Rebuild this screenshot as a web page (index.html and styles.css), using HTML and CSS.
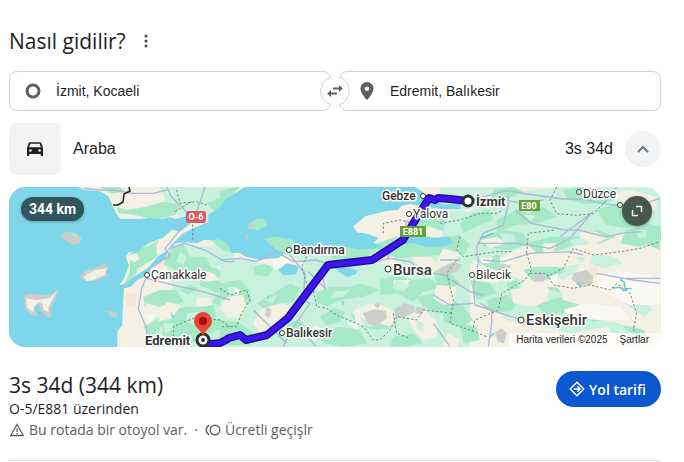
FILE: index.html
```html
<!DOCTYPE html>
<html lang="tr">
<head>
  <meta charset="UTF-8" />
  <meta name="viewport" content="width=device-width, initial-scale=1.0" />
  <title>Nasıl gidilir?</title>
  <link rel="stylesheet" href="styles.css">
</head>
<body>
  <main class="directions">
    <header class="header">
      <h1 class="title">Nasıl gidilir?</h1>
      <button class="more-btn" type="button" aria-label="Diğer">
        <svg width="4" height="14" viewBox="0 0 4 14" fill="#474747"><circle cx="2" cy="2" r="1.5"/><circle cx="2" cy="7" r="1.5"/><circle cx="2" cy="12" r="1.5"/></svg>
      </button>
    </header>

    <form class="places">
      <label class="field">
        <svg class="field-icon" viewBox="0 0 20 20"><circle cx="10" cy="10" r="6" fill="none" stroke="#5e5e5e" stroke-width="3"/></svg>
        <input class="place" type="text" value="İzmit, Kocaeli" aria-label="Başlangıç">
      </label>
      <label class="field">
        <svg class="field-icon" viewBox="0 0 20 20"><path d="M10 1a6.600 6.600 0 0 0-6.600 6.600C3.400 12.300 10 19.200 10 19.200s6.600-6.900 6.600-11.600A6.600 6.600 0 0 0 10 1zm0 9a2.300 2.300 0 1 1 0-4.600 2.300 2.300 0 0 1 0 4.600z" fill="#5e5e5e"/></svg>
        <input class="place" type="text" value="Edremit, Balıkesir" aria-label="Varış">
      </label>
      <button class="swap-btn" type="button" aria-label="Yer değiştir">
        <svg width="30" height="30" viewBox="0 0 30 30">
          <path d="M11 1.100A14.500 14.500 0 0 0 11 28.900M19 1.100A14.500 14.500 0 0 1 19 28.900" fill="none" stroke="#d2d2d2"/>
          <path d="M13 12.500H19M17 17.500H11" stroke="#5e5e5e" stroke-width="2" fill="none"/>
          <path d="M19 9l3.700 3.500L19 16zM11 14l-3.700 3.500L11 21z" fill="#5e5e5e"/>
        </svg>
      </button>
    </form>

    <section class="mode">
      <span class="mode-icon">
        <svg width="18" height="18" viewBox="0 0 18 18"><path d="M4 2.200h10c.6 0 1.100.3 1.300.9L17 8v7.200c0 .5-.3.800-.8.800h-.7c-.5 0-.8-.3-.8-.8V14H3.300v1.200c0 .5-.3.800-.8.800h-.7c-.5 0-.8-.3-.8-.8V8l1.700-4.900c.2-.6.700-.9 1.300-.9zM4.300 3.700 3.100 7.300h11.800l-1.200-3.600zM4.400 9.200a1.300 1.300 0 1 0 0 2.600 1.300 1.300 0 0 0 0-2.600zm9.200 0a1.300 1.300 0 1 0 0 2.600 1.300 1.300 0 0 0 0-2.600z" fill="#1f1f1f" fill-rule="evenodd"/></svg>
      </span>
      <span class="mode-name">Araba</span>
      <span class="mode-time">3s 34d</span>
      <button class="round-btn" type="button" aria-label="Daralt">
        <svg width="14" height="14" viewBox="0 0 14 14"><path d="M2 10l5-5 5 5" fill="none" stroke="#70757a" stroke-width="2"/></svg>
      </button>
    </section>

    <section class="map">
      <svg class="map-canvas" viewBox="0 0 652 160" preserveAspectRatio="xMidYMid slice">
        <rect width="652" height="160" fill="#f4f0e4"/>

        <!-- west -->
        <g transform="scale(.33333) translate(-27 -21)">
          <path class="light" d="M480 21h210v80l-60 20-90-10-40-40zM700 190l-90 10-60-10-40 25-10 50 20 60-40 40-40 90-10 90h280z"/>
          <path class="wood" d="M350 80l30 10 60-10 50-15 50 10-15 30-60 15-60-15-50-5zM620 70l50-20 30-5v60l-60-15zM390 220l60-25 25-15 10 30-20 25-50 30-15 35-30 20 20-45zM510 200l40-10 20 40 50 0 10 30 50 15-30 20-60-10-50 10-20-30-30-10zM430 350l50-20 50 0 20 35-40 20-50 0-20 25zM480 400l80-20 60 0 30-30 50 20v60l-60 25-50 30-60 10-40-20zM630 180l50-10 20 10v40l-30-10-20-15zM600 290l50 10 50 20v25l-60-10-40-20zM300 21h60l15 15-40 5zM430 440l60-30-10 40-30 20zM540 330l30-15 25 10-30 20z"/>
          <path class="sand" d="M375 335l35 5 5 70 20 60 0 30h-80l20-60zM440 370l40 10 30-10-10 40-50 5-20-20zM600 270l40 10 20 20-40 5-30-10zM590 350l40 5 10 20-50 5zM390 225l20-5 10 15-15 12-15-8zM470 190l60-45 40-15 20 15-60 35-30 50-30-10zM500 365l45 10-30 40-40 10z"/>
          <path class="light" d="M560 400l40-5 20 25-30 20-30-15zM640 370l30 10 10 30-30 10zM490 430l30 0 0 20-25 10zM540 215l20 15-10 25-20-10z"/>
          <path class="peach" d="M380 340l30 5-5 35-25-10z"/>
          <path class="pale" d="M430 405l40-5-20 30zM650 260l30-10 20 5v30l-30 0z"/>
        </g>

        <!-- center -->
        <g transform="scale(.33333) translate(633 -21)">
          <path class="light" d="M0 215l50 20 60-10 70 5 90-30 180-5 120 10 120-30 60-20V501H0z"/>
          <path class="wood" d="M0 35l40-14h20l-20 20-40 20zM0 310l60-10 30 30 5 40-40 10-20-20-35 0zM100 260l40-10 20 20-15 20-40-5zM110 370l50-30 50-30 30 15-20 40-60 10-30 10zM290 340l40-20 60 0 30-10 60 20-50 20-70 10-40 20-30-15zM330 230l60-30 80 10-30 20-70 20zM430 200l50-5 60 5-50 15zM480 300l50-15 50 15 50-5 30 30-50 10-30 30-50-25-50 5zM590 350l50-10 60 20 40 25-90 15-40-20zM390 400l40 10 80 0 20 30-60 10-60-15zM300 410l40-25 35 10-15 30-40 10zM440 200l90-30 40 0 20 20 60 10 80-10-10 30-120 10-70 5-30-15zM610 90l120 10 10 40-70 15-40-15-50 0zM0 420l50 5 50 30-10 40H0zM300 460l60-20 60 10 20 40-60 10-70-10zM520 470l60-10 30 30-60 10h-40zM640 260l50 20 30 30-30 20-40-10zM200 430l40-10 20 20-20 30-30-10z"/>
          <path class="sand" d="M40 220l60 15 60-10 60 5 40 30-60 5-80-15-60-10zM120 390l60-20 40 10-10 40-40 20-20 40-30-20-20-30zM400 390l50-20 50 10 30 20-10 40-50-10-60 10zM560 405l50-25 20 30 40 20-10 40-50 10-30-30zM20 350l50-5 10 40-30 30-30-5-20-25zM420 240l50-20 50 10 10 25-60-5zM520 300l50 0-10 20-40-5zM250 450l40-15 20 20-30 30zM570 230l60 0 30 30-20 20-40-20zM280 300l40-5 0 30-30 0z"/>
          <path class="light" d="M340 335l50-5-20 20-35 5zM530 300l40 15-20 20-35-10zM130 360l40-15-10 25zM420 410l30 15 30-5-10 20-40 0zM20 320l30 0 10 20-30 5zM590 420l20 10 0 25-20-10z"/>
          <path class="grey" d="M428 400l35-12 35 5 3 22-35 25-22-10zM522 390l28-20 30 5 5 20-35 18-25-2zM590 380l25 5-10 18-20-5zM460 372l22-3-8 18zM140 380l15 10-8 25-12-10z"/>
          <path class="pale" d="M160 240l60-10-20 30-40 10zM380 430l40 0-10 20zM40 320l20 10-10 20z"/>
        </g>

        <!-- east -->
        <g transform="scale(.33333) translate(1293 -21)">
          <path class="light" d="M30 90l60 5 130-60 160-14h290v110l-60 30-130 0-100 50-120-15-130 60L30 240l-30-60zM-10 410l70 0 30 90H-10zM110 300l80-20 60 20-20 70-60 30-60-30zM300 250l120-20 120 10-60 50-100 20zM190 370l150-20 110 30 60 60-120 20-120-30-80-10zM0 21h220l-60 50-100 20-60-10z"/>
          <path class="wood" d="M-20 175l80-10 30 30-20 30-60-10-40-20zM60 130l40-30 50-10 10 30-50 20-40 20zM170 120l60-30 40 10 40-20 40 30-60 20-60 5-60 20zM120 170l70-20 60 10 20 30-60 20-80-10zM260 190l70-20 80 0 60-20 60 20-50 20-80 5-50 20-60 5zM370 30l50-9 100 10 30 20-60 20-60 0-50-15zM470 90l60-20 40 30 60-5v30l-70 20-60-10zM560 150l60-20 50 10v40l-70 20-60-10zM110 240l60-15 60 10-20 30-70 10zM90 300l60 10 20 30-60 20zM140 360l60-15 40 20-30 30-60 0zM250 270l60-20 70 20-40 25-60 10zM320 320l60 5 60 20 60 10 30 30-70 10-50-15-60-20zM10 370l60 10 30 40-40 20-50-15zM60 430l50 10 10 40-50 10zM530 380l60 20 30 70-40 10-30-30zM610 190l50-10v30zM160 30l60-9 30 15-50 20-50 15zM200 310l30-10 10 40-30 10zM280 370l70-15 60 20 70 10 40 30-60 10-80-25-60 5z"/>
          <path class="sand" d="M500 45l70-15 80 20v40l-80-10zM420 155l50 0 30 20-40 20-40-10zM200 230l70 10 50-30 60 10 50 30-60 10-80 0-70 15zM440 230l100-20 130 0v260l-90-30-80-10-60-50-70-20-20-50 50-30zM100 240l40 20 60 20-30 30-70-10zM10 205l50 15-20 40-35 25-20-30zM210 330l60-10 60 40-50 20-60-10zM100 390l80 10 60 60-60 30-40-20zM-10 315l60 5-10 50-30 5-30-20zM20 460l40 20-10 20H10zM310 190l40 0-10 30-30-5zM120 180l50-10 30 20-50 15z"/>
          <path class="light" d="M460 220l60 10 30 20-60 15-40-15zM560 340l40 10 40 40-30 20-40-30-30-20zM180 160l40 5 10 20-40 0zM390 180l40-5 20 10-50 12zM250 105l40 0-20 20zM590 150l30 0 0 20-25 5zM330 330l40 10-10 15-40-5zM480 420l60 10 30 30-50 0z"/>
          <path class="pale" d="M470 290l60-15 100 10 30 30v60l-90 0-60-30-40-20zM370 390l70-20 100 10 30 40-100 0-80-10zM180 230l50 0-20 25-30-5zM120 235l40-5-10 20-25 0zM330 290l25-10-5 30-15 5z"/>
          <path class="grey" d="M-5 268l45-23 28 10-20 22-48 8zM285 285l20-10 15 15-10 15-25 0zM400 280l40-10 20 20-5 25-35 0-25-15zM165 455l20-10 15 15-8 30-18-5zM170 260l40-5-5 15-18 5z"/>
          <path class="peach" d="M445 265l25-5 0 30-20-5z"/>
          <path d="M540 298l12 8 3 20 20 0M515 324l25-2 10 10 20-8M410 310l15 8M120 175l40-15M150 470l12-10" fill="none" stroke="#58c6e2" stroke-width="4"/>
        </g>

        <!-- sea -->
        <g class="water" transform="scale(.33333) translate(-27 -21)">
          <path d="M20 21h215l15 8 50 5 25 15 22 50 15 18 60 0 30-3 35 3 20-6 20 6 30-8 25 5-15 20-25 20-25-5-30 25-25 10-15 5-40 30-20-3-10 15 10 25-15 40-15 20 20-5 25-20 45-30 25-30 30-20 15-20 30-30 40-20 50-20 30-15 20-20V180l-20-15-25 15-30 0-20 10-30-3-35 3-20 20-15 30-35 20-25 30-20 10-20 20-20 5-5 80 0 30-15 20v50H20z"/>
          <path d="M510 395l15 15-8 5z"/>
        </g>
        <g class="water" transform="scale(.33333) translate(633 -21)">
          <path d="M75 21h510l25 15 10 25 50 12 50 0 0 14-50 1-50-8-50-8-25 5-10 12-40 5-60 15-35 30 10 18 35 5 30 12-15 15 30 12-60 8-60-8-60 5-50 5-60 5-25 18-60 5-40-10-15-10-25 0-15-30-35-15-20 5V105l35-25 20-25z"/>
          <path d="M545 185l30-18 25-5 15 8 40 3 30-3 15 18-25 10-50 3-50-12-30 5zM175 270l25-20 35 8-5 25-40 3zM345 265l45-2 22 10-5 10-25 8-20-12zM365 360l8 10-5 8zM140 350l12-5-8 15z"/>
        </g>
        <g transform="scale(.33333) translate(-27 -21)">
          <path class="grey" d="M180 170l15-14 30 2 20 15-5 18-25 4-15-12zM238 290l20-18 35-12 20-8 12 10-5 20 10 6-20 4-20 10-35 0zM70 345l30-5 30 5 20 0 28-20-20 50-8 15 8 20-15 3-20-20-8-22-12 15 14 22-20-2-22-18zM320 392l30 5 0 15-15-2z"/>
          <path class="sand" d="M250 290l35-20 35-5-5 20-35 14-20 4zM78 355l30 5 40-5 22-20-25 45 0 15-15-5-2-18-12-5-12 10-5 20-18-15z"/>
          <path class="wood" d="M205 158l20 0 8 8-15 0zM748 130l25-15 25 5 5 15-30 15-30-5zM790 175l40-5 50 10 5 20-35 18-25-12z"/>
          <path class="grey" d="M748 125l12 5-4 20-12-8zM738 168l8-2-3 14z"/>
        </g>

        <!-- roads and borders -->
        <g class="road" transform="scale(.33333) translate(-27 -21)">
          <path d="M500 21l15 30 45 45M615 21l-25 75-55 60-40 50 15 20-60 40-25 60-10 60 25 60 0 50M510 205l45-15 60 20 60 35 30 0M440 295l100 25 70 15 80 25M250 25l50 5 40 0 60 10 60 0 40-10"/>
        </g>
        <g class="road" transform="scale(.33333) translate(633 -21)">
          <path d="M0 240l60-5 50 10 60-30 50 30 70-5 70 25 110-20 40-10 60 10 40 30 60 10 80 50 40 10M210 225l45 55-5 80 20 10-60 85-20 45M265 275l50 50-10-60M100 390l60 60 40 40M505 240v-30M290 500l-30-30-20-40M560 120l-10 60M640 430l50 70"/>
        </g>
        <g class="road" transform="scale(.33333) translate(1293 -21)">
          <path d="M80 65l120-33 60 10 110 15 60 0 40 10 60 10 60 5 75-30M205 45l0 30-15 60-60 25-20 40 5 50-15 70 5 55 140 45M225 90l50 40 100 20 40 0 80 20 50-10 60-5M0 240l60 0M115 190l115 0 100 15 60-30 60-70M130 240l60 5 80-25 120-5 40 10 0 0M470 280l80 15 110 0M660 310l-80-10-60-10M120 370l35 20 0 40-10 70M-20 345l50 30 70-5M360 170l100-75M190 60l60 10 60-10"/>
        </g>
        <g class="border" transform="scale(.33333) translate(633 -21)">
          <path d="M0 325l30 20 50-15 10 30-25 40-15 40-50 0M260 230l-15 30 15 50 20 20 10 50 30 5 30 20 60 25 20 10 30 40 20 0 30-30 20-40 60 10 20-30 90 10M490 160l0-30 50-10 40 10M520 400l10 60 40 15"/>
        </g>
        <g class="border" transform="scale(.33333) translate(1293 -21)">
          <path d="M0 130l60-10 60-20 50 0 20-10M60 170l-10 40 20 20 100-15 50 0M350 21l-20 40 20 40 60 5 50-5 40-40 30-40M260 220l5-60 80-10M260 220l15 50-20 30-70 40-10 50-70 30-10 40M270 280l50 0 20 35 60 10 50-10 60 15 20-20 40 30 20 60-10 50 30 30M320 290l50-25 30-60 60 20 80-10 60-10 60-20M50 240l-30 40 20 80-10 70 60 20 50 20"/>
        </g>
        <g class="border" transform="scale(.33333) translate(-27 -21)">
          <path d="M530 30l10 40 50-5 30 10M525 95l50-30M578 120v60M520 470l0-30 60-25 80 5 30 20"/>
        </g>
        <path d="M104 18l5 0 5-3 1-8 6-3-1-4" fill="none" stroke="#222" stroke-width="1.500"/>

        <!-- route -->
        <g fill="none" stroke-linejoin="round">
          <path d="M194 156L204 157 211 156 217 153 220 151 231 148 237 153 258 148 279 131 319 78 363 73 394 53 420 11 426 13 429 11 441 12 458 14" stroke="#22108a" stroke-width="8"/>
          <path d="M194 156L204 157 211 156 217 153 220 151 231 148 237 153 258 148 279 131 319 78 363 73 394 53 420 11 426 13 429 11 441 12 458 14" stroke="#3c14f5" stroke-width="5"/>
        </g>

        <!-- towns -->
        <g fill="#fff" stroke="#333">
          <circle cx="138" cy="88" r="2.500"/><circle cx="280" cy="63" r="2.500"/><circle cx="273" cy="146" r="2.500"/>
          <circle cx="414" cy="9" r="2.500"/><circle cx="400" cy="27" r="2.500"/><circle cx="379" cy="82" r="3"/>
          <circle cx="463" cy="88" r="2.500"/><circle cx="512" cy="133" r="3"/><circle cx="570" cy="5" r="2.500"/><circle cx="611" cy="18" r="2.500"/>
        </g>
        <circle cx="459" cy="14" r="5" fill="#fff" stroke="#303030" stroke-width="3"/>
        <g class="town">
          <text x="142" y="92">Çanakkale</text>
          <text class="semi" x="284" y="67">Bandırma</text>
          <text class="semi" x="277" y="150">Balıkesir</text>
          <text class="semi" x="373" y="13">Gebze</text>
          <text x="404" y="31">Yalova</text>
          <text x="467" y="92">Bilecik</text>
          <text x="574" y="11">Düzce</text>
          <text class="city" x="384" y="88">Bursa</text>
          <text class="city" x="517" y="138">Eskişehir</text>
          <text class="end" x="467" y="19">İzmit</text>
          <text class="end" x="136" y="158">Edremit</text>
        </g>
        <circle cx="194" cy="153" r="6" fill="#fff" stroke="#303030" stroke-width="3"/>
        <circle cx="194" cy="153" r="2" fill="#303030"/>
        <path d="M194 150c-1-7-9-9-9-16a9 9 0 0 1 18 0c0 7-8 9-9 16z" fill="#ea4335"/>
        <circle cx="194" cy="134" r="4" fill="#a50e0e"/>

        <rect x="177" y="24" width="20" height="12" rx="3" fill="#d95c5c"/>
        <rect x="391" y="39" width="26" height="11" fill="#689f38"/>
        <rect x="510" y="13" width="21" height="11" fill="#689f38"/>
        <g class="shield"><text x="187" y="33">O-6</text><text x="404" y="48">E881</text><text x="520" y="22">E80</text></g>
      </svg>
      <span class="distance">344 km</span>
      <button class="expand-btn" type="button" aria-label="Haritayı genişlet">
        <svg width="12" height="12" viewBox="0 0 12 12"><path d="M5 1.500h5.500V7M1.500 5v5.500H7" fill="none" stroke="#fff" stroke-width="1.500"/></svg>
      </button>
      <footer class="map-credits"><span>Harita verileri ©2025</span><a href="#sartlar">Şartlar</a></footer>
    </section>

    <section class="summary">
      <div class="details">
        <h2 class="total">3s 34d (344 km)</h2>
        <p class="via">O-5/E881 üzerinden</p>
        <p class="notes">
          <svg width="16" height="16" viewBox="0 0 16 16" fill="none" stroke="#5e5e5e"><path d="M8 2.500l6.300 11H1.700z" stroke-width="1.300"/><path d="M8 6.500v3.500M8 11v1.300" stroke-width="1.300"/></svg>
          <span>Bu rotada bir otoyol var.</span>
          <span class="dot">·</span>
          <svg width="16" height="16" viewBox="0 0 16 16" fill="none" stroke="#5e5e5e" stroke-width="1.400"><circle cx="10" cy="8" r="4.800"/><path d="M4.300 3.200C.2 5.500.2 10.500 4.300 12.800"/></svg>
          <span>Ücretli geçişlr</span>
        </p>
      </div>
      <button class="go-btn" type="button">
        <svg width="16" height="16" viewBox="0 0 16 16" fill="none" stroke="#fff" stroke-width="1.500"><path d="M8 1.200L14.800 8 8 14.800 1.200 8z" stroke-linejoin="round"/><path d="M4.800 8h6M8.300 5.300L11 8l-2.700 2.700"/></svg>
        Yol tarifi
      </button>
    </section>
  </main>
</body>
</html>
```
FILE: styles.css
```css
* {
  box-sizing: border-box;
}

body {
  margin: 0;
  background: #fff;
  color: #1f1f1f;
  font-family: "Liberation Sans", Arial, sans-serif;
}

h1, h2, p {
  margin: 0;
  font-weight: 400;
}

button {
  border: none;
  padding: 0;
  cursor: pointer;
  display: flex;
  align-items: center;
  justify-content: center;
}

.directions {
  margin: 0 23px 0 9px;
  padding-top: 27px;
  border-bottom: 1px solid #dadce0;
}

.header {
  display: flex;
  align-items: center;
  gap: 12px;
  height: 28px;
}

.title,
.total {
  font-family: "Open Sans", sans-serif;
  font-size: 21px;
  line-height: 28px;
}

.more-btn {
  width: 16px;
  height: 24px;
  background: none;
}

.places {
  position: relative;
  display: grid;
  grid-template-columns: 1fr 1fr;
  gap: 8px;
  margin-top: 16px;
}

.field {
  min-width: 0;
  height: 40px;
  display: flex;
  align-items: center;
  gap: 13px;
  padding: 0 13px;
  border: 1px solid #d2d2d2;
  border-radius: 8px;
}

.field + .field {
  padding-left: 17px;
}

.field-icon {
  width: 20px;
  height: 20px;
  flex-shrink: 0;
}

.place {
  flex: 1;
  min-width: 0;
  border: none;
  outline: none;
  padding: 0;
  background: none;
  color: #1f1f1f;
  font-family: inherit;
  font-size: 14px;
}

.swap-btn {
  position: absolute;
  top: 50%;
  left: 50%;
  width: 30px;
  height: 30px;
  transform: translate(-50%, -50%);
  border-radius: 50%;
  background: #fff;
}

.mode {
  display: flex;
  align-items: center;
  gap: 12px;
  margin: 12px 0;
  font-size: 16px;
}

.mode-icon {
  display: flex;
  align-items: center;
  justify-content: center;
  width: 52px;
  height: 52px;
  border-radius: 8px;
  background: #f1f3f4;
}

.mode-name {
  flex: 1;
}

.round-btn {
  width: 36px;
  height: 36px;
  border-radius: 50%;
  background: #f1f3f4;
}

.map {
  position: relative;
  height: 160px;
  border-radius: 16px;
  overflow: hidden;
}

.map-canvas {
  display: block;
  width: 100%;
  height: 100%;
}

.light { fill: #c8f1de; }
.wood { fill: #a6e9c7; }
.sand { fill: #f4f0e4; }
.pale { fill: #faf8f3; }
.peach { fill: #f3e6d4; }
.grey { fill: #cbcfcb; }
.water { fill: #7dd6ea; }

.road {
  fill: none;
  stroke: #a9b9d6;
  stroke-width: 4;
}

.border {
  fill: none;
  stroke: #6f8880;
  stroke-width: 3;
  stroke-dasharray: 7 6;
}

.town {
  font-family: Roboto, sans-serif;
  font-size: 12px;
  fill: #333;
  stroke: #fff;
  stroke-width: 3px;
  stroke-linejoin: round;
  paint-order: stroke;
}

.semi {
  font-weight: 500;
}

.city {
  font-size: 15px;
  font-weight: 500;
}

.end {
  font-size: 13px;
  font-weight: 700;
}

.shield {
  font-family: Roboto, sans-serif;
  font-size: 9px;
  font-weight: 700;
  fill: #fff;
  text-anchor: middle;
}

.distance {
  position: absolute;
  top: 10px;
  left: 12px;
  padding: 0 8px;
  border-radius: 12px;
  background: #32555d;
  box-shadow: 0 1px 3px rgba(0, 0, 0, 0.3);
  color: #fff;
  font-family: Roboto, sans-serif;
  font-size: 14px;
  font-weight: 700;
  line-height: 24px;
}

.expand-btn {
  position: absolute;
  top: 9px;
  right: 9px;
  width: 30px;
  height: 30px;
  border-radius: 50%;
  background: #47564f;
  box-shadow: 0 1px 3px rgba(0, 0, 0, 0.3);
}

.map-credits {
  position: absolute;
  right: 0;
  bottom: 0;
  display: flex;
  gap: 12px;
  padding: 0 12px 0 7px;
  background: rgba(255, 255, 255, 0.7);
  font-size: 10px;
  line-height: 14px;
}

.map-credits a {
  color: inherit;
  text-decoration: none;
}

.summary {
  display: flex;
  justify-content: space-between;
  align-items: flex-start;
  padding: 24px 0 20px;
  font-family: "Open Sans", sans-serif;
  font-size: 14px;
}

.via {
  font-weight: 500;
  line-height: 20px;
}

.notes {
  display: flex;
  align-items: center;
  gap: 4px;
  color: #5e5e5e;
  line-height: 21px;
}

.dot {
  margin: 0 3px;
}

.go-btn {
  gap: 4px;
  height: 36px;
  padding: 0 15px 0 13px;
  border-radius: 18px;
  background: #0b57d0;
  color: #fff;
  font-family: inherit;
  font-size: 14px;
  font-weight: 600;
}
```
